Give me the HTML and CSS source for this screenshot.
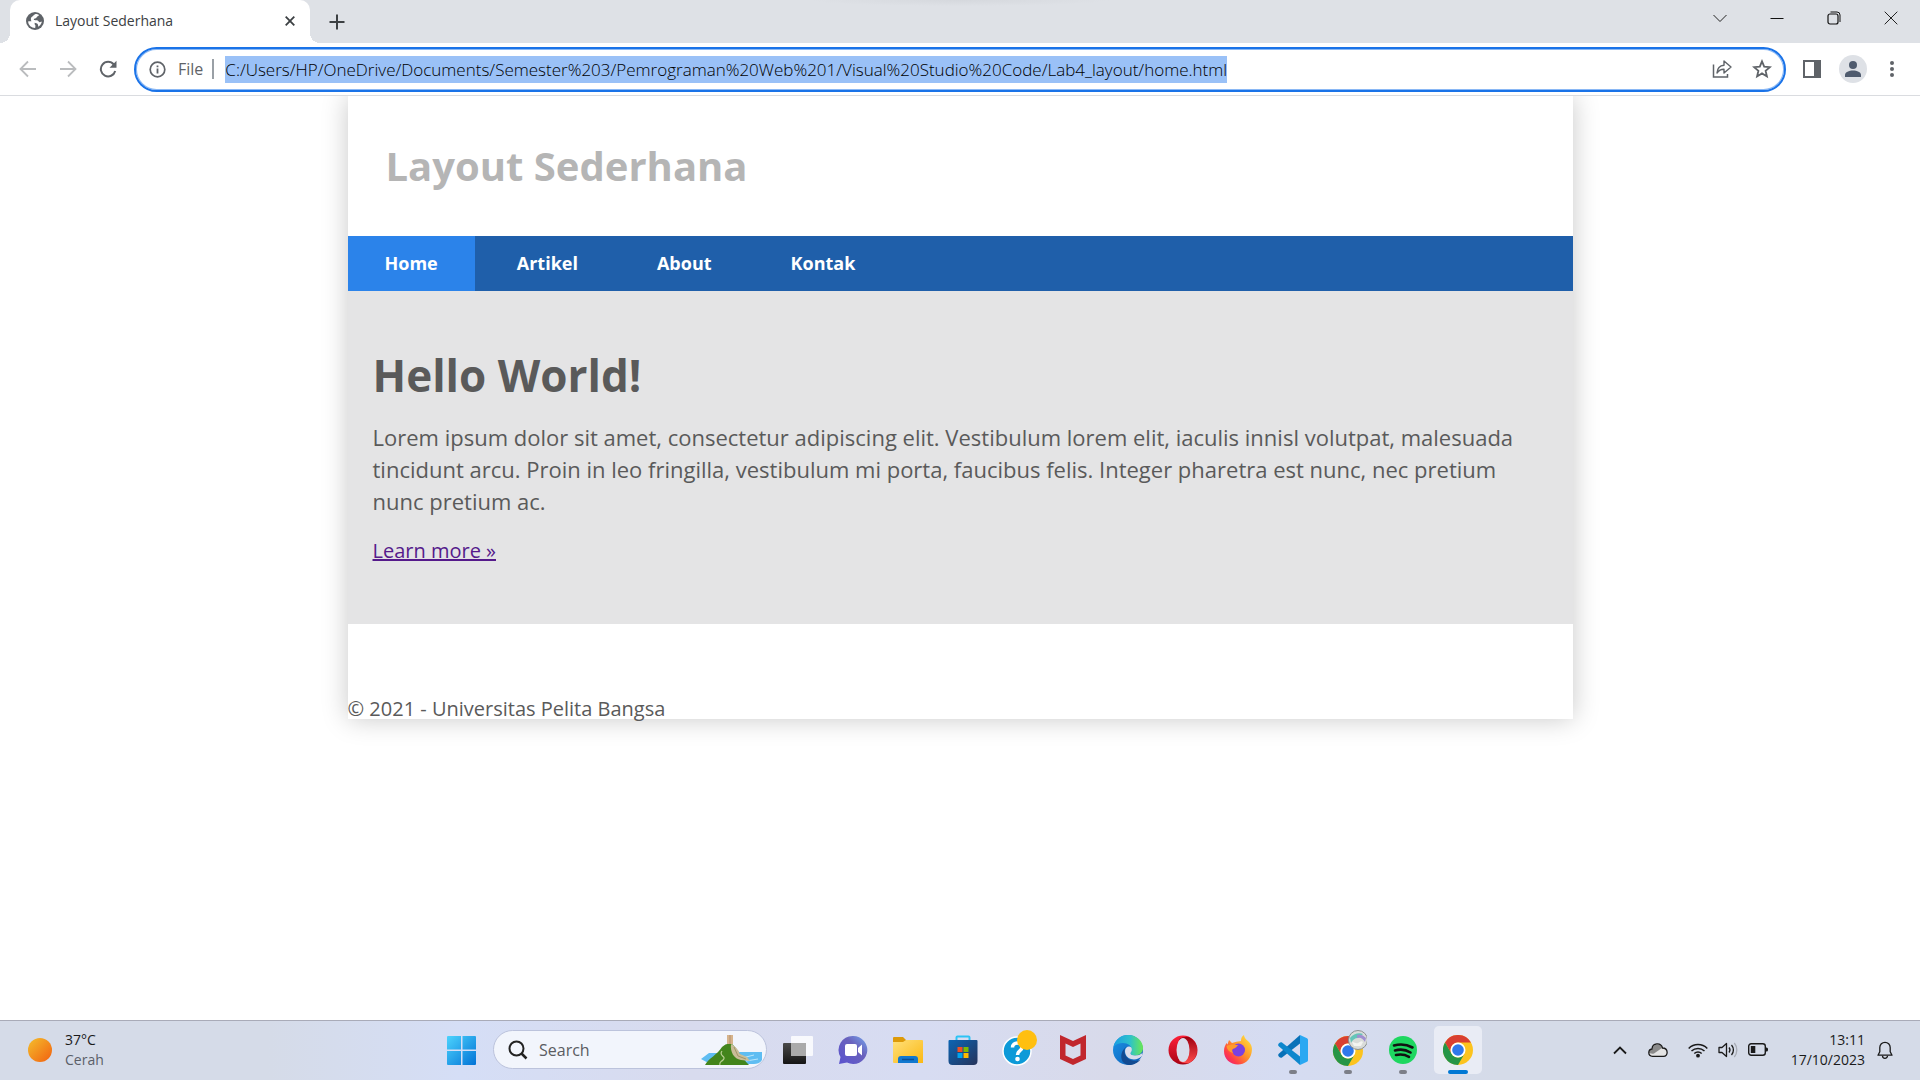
FILE: index.html
```html
<!DOCTYPE html>
<html lang="id">
<head>
<meta charset="utf-8">
<meta name="viewport" content="width=device-width, initial-scale=1">
<title>Layout Sederhana</title>
<link rel="stylesheet" href="styles.css">
</head>
<body>
<header class="browser">
  <div class="tabstrip">
    <div class="tab">
      <svg class="tab-icon" width="18" height="18" viewBox="0 0 18 18"><circle cx="9" cy="9" r="9" fill="#5f6368"/><path d="M2 9.500c2.500-.3 5.500-.3 6.500 1 .6.900-.3 1.700.5 2.300.8.500.3 2 .2 3.200A7 7 0 0 1 2 9.500zM9.500 2c1.500 0 2.500.4 3.500 1-.3 1.400-2.200 1-2.400 2.400-.2 1.200-2.800.6-2.800 1.900 0 1.300 2.500.7 3.800 1.200 1.300.4.900 1.700 2.200 1.700.9 0 1.300-.5 2.100-.6-.4 2.300-1.700 4-3.700 5.200.1-1.500-.2-2.500-1.200-3.200-1.500-1-5.200-.6-5.800-2.800C4.700 7 4.600 5.600 6 4.800 7.200 4.100 7.500 2.700 9.500 2z" fill="#fff"/></svg>
      <span class="tab-title">Layout Sederhana</span>
      <button class="icon-btn tab-close" aria-label="Close tab"><svg width="10" height="10" viewBox="0 0 10 10"><path d="M.7.7l8.600 8.600M9.300.7L.7 9.300" stroke="#3c4043" stroke-width="1.800"/></svg></button>
    </div>
    <button class="icon-btn new-tab" aria-label="New tab"><svg width="16" height="16" viewBox="0 0 16 16"><path d="M8 .5v15M.5 8h15" stroke="#3c4043" stroke-width="2"/></svg></button>
    <div class="window-controls">
      <button class="icon-btn" aria-label="Search tabs"><svg width="14" height="14" viewBox="0 0 14 14"><path d="M.5 4L7 10.500 13.500 4" fill="none" stroke="#222"/></svg></button>
      <button class="icon-btn" aria-label="Minimize"><svg width="14" height="14" viewBox="0 0 14 14"><path d="M.5 7.500h13" stroke="#111"/></svg></button>
      <button class="icon-btn" aria-label="Restore"><svg width="14" height="14" viewBox="0 0 14 14"><rect x="1" y="3" width="10" height="10" rx="2" fill="none" stroke="#111" stroke-width="1.200"/><path d="M3.500 1h6.500a3 3 0 0 1 3 3v7" fill="none" stroke="#111"/></svg></button>
      <button class="icon-btn" aria-label="Close"><svg width="14" height="14" viewBox="0 0 14 14"><path d="M.7.7l12.600 12.600M13.300.7L.7 13.300" stroke="#222"/></svg></button>
    </div>
  </div>
  <div class="toolbar">
    <button class="icon-btn tool" aria-label="Back"><svg width="18" height="18" viewBox="0 0 18 18"><path d="M17 9H2M9 1.500L1.500 9 9 16.500" fill="none" stroke="#babcbe" stroke-width="1.800"/></svg></button>
    <button class="icon-btn tool" aria-label="Forward"><svg width="18" height="18" viewBox="0 0 18 18"><path d="M1 9h15M9 1.500L16.500 9 9 16.500" fill="none" stroke="#babcbe" stroke-width="1.800"/></svg></button>
    <button class="icon-btn tool" aria-label="Reload"><svg width="18" height="18" viewBox="0 0 18 18"><path d="M14.800 4.500A7.300 7.300 0 1 0 16.200 11" fill="none" stroke="#5f6368" stroke-width="2"/><path d="M17.500.8v7h-7z" fill="#5f6368"/></svg></button>
    <div class="omnibox">
      <svg class="info" width="17" height="17" viewBox="0 0 17 17"><circle cx="8.500" cy="8.500" r="7.300" fill="none" stroke="#5f6368" stroke-width="1.700"/><path d="M8.500 7.500v5M8.500 4.400v1.800" stroke="#5f6368" stroke-width="1.800"/></svg>
      <label class="scheme" for="url">File</label>
      <input id="url" class="url" type="text" size="100" spellcheck="false" value="C:/Users/HP/OneDrive/Documents/Semester%203/Pemrograman%20Web%201/Visual%20Studio%20Code/Lab4_layout/home.html">
      <div class="omni-actions">
        <button class="icon-btn" aria-label="Share"><svg width="20" height="20" viewBox="0 0 20 20"><path d="M1.500 5.500v12.500H15.500V15" fill="none" stroke="#5f6368" stroke-width="1.500"/><path d="M5 14c.3-4.500 3-7.500 7-7.800V2l7 6-7 6V10.300C9 10.200 6.800 11.500 5 14z" fill="none" stroke="#5f6368" stroke-width="1.400" stroke-linejoin="round"/></svg></button>
        <button class="icon-btn" aria-label="Bookmark"><svg width="20" height="20" viewBox="0 0 20 20"><path d="M10 2.300l2.200 5.300 5.700.5-4.300 3.700 1.300 5.600L10 14.400l-4.900 3 1.300-5.600L2.100 8.100l5.700-.5z" fill="none" stroke="#5f6368" stroke-width="1.800"/></svg></button>
      </div>
    </div>
    <div class="tool-actions">
      <button class="icon-btn" aria-label="Side panel"><svg width="18" height="18" viewBox="0 0 18 18"><rect width="18" height="18" fill="#5f6368"/><rect x="2" y="2" width="9" height="14" fill="#fff"/></svg></button>
      <button class="icon-btn" aria-label="Profile"><svg width="28" height="28" viewBox="0 0 28 28"><circle cx="14" cy="14" r="14" fill="#dee1e6"/><circle cx="14" cy="10" r="4" fill="#4f5b6e"/><path d="M6 22v-2c0-3 4-4.500 8-4.500s8 1.500 8 4.500v2z" fill="#4f5b6e"/></svg></button>
      <button class="icon-btn" aria-label="Menu"><svg width="18" height="18" viewBox="0 0 18 18"><g fill="#5f6368"><circle cx="9" cy="3" r="2"/><circle cx="9" cy="9" r="2"/><circle cx="9" cy="15" r="2"/></g></svg></button>
    </div>
  </div>
</header>

<main class="viewport">
  <div class="container">
    <header class="site-header"><h1 class="site-title">Layout Sederhana</h1></header>
    <nav class="site-nav">
      <a class="nav-link active" href="#home">Home</a>
      <a class="nav-link" href="#artikel">Artikel</a>
      <a class="nav-link" href="#about">About</a>
      <a class="nav-link" href="#kontak">Kontak</a>
    </nav>
    <section class="hero">
      <h2 class="hero-title">Hello World!</h2>
      <p class="hero-text">Lorem ipsum dolor sit amet, consectetur adipiscing elit. Vestibulum lorem elit, iaculis innisl volutpat, malesuada tincidunt arcu. Proin in leo fringilla, vestibulum mi porta, faucibus felis. Integer pharetra est nunc, nec pretium nunc pretium ac.</p>
      <a class="hero-link" href="#more">Learn more »</a>
    </section>
    <footer class="site-footer"><p class="copyright">© 2021 - Universitas Pelita Bangsa</p></footer>
  </div>
</main>

<footer class="taskbar">
  <svg width="0" height="0" class="defs" aria-hidden="true">
    <defs>
      <linearGradient id="sun" x1="0" y1="0" x2="1" y2="1"><stop offset="0" stop-color="#f4bf2d"/><stop offset="1" stop-color="#f2600f"/></linearGradient>
      <linearGradient id="win" x1="0" y1="0" x2="1" y2="1"><stop offset="0" stop-color="#4cd3fd"/><stop offset="1" stop-color="#0273d6"/></linearGradient>
      <linearGradient id="dark" x1="0" y1="0" x2="0" y2="1"><stop offset="0" stop-color="#4a4a4a"/><stop offset="1" stop-color="#151515"/></linearGradient>
      <linearGradient id="chat" x1="1" y1="0" x2="0" y2="1"><stop offset="0" stop-color="#75a8ee"/><stop offset=".4" stop-color="#6a62bd"/><stop offset="1" stop-color="#5a52cf"/></linearGradient>
      <linearGradient id="folder" x1="0" y1="0" x2="1" y2="1"><stop offset="0" stop-color="#ffe07a"/><stop offset="1" stop-color="#fbb813"/></linearGradient>
      <linearGradient id="store" x1="0" y1="0" x2="1" y2="1"><stop offset="0" stop-color="#0b65b4"/><stop offset="1" stop-color="#26335a"/></linearGradient>
      <linearGradient id="edgeTop" x1="0" y1="0" x2="1" y2="0"><stop offset="0" stop-color="#1b9de2"/><stop offset=".55" stop-color="#2cc1cc"/><stop offset="1" stop-color="#6be852"/></linearGradient>
      <linearGradient id="edgeLow" x1="0" y1="0" x2="1" y2="1"><stop offset="0" stop-color="#1a93e6"/><stop offset="1" stop-color="#0d5bb5"/></linearGradient>
      <linearGradient id="opera" x1="0" y1="0" x2="0" y2="1"><stop offset="0" stop-color="#ff2039"/><stop offset="1" stop-color="#a70214"/></linearGradient>
      <linearGradient id="operaIn" x1="0" y1="0" x2="0" y2="1"><stop offset="0" stop-color="#9c0010"/><stop offset="1" stop-color="#ff4b4b"/></linearGradient>
      <linearGradient id="fox" x1="1" y1="0" x2="0" y2="1"><stop offset="0" stop-color="#fff044"/><stop offset=".45" stop-color="#ff9428"/><stop offset=".75" stop-color="#ff3c48"/><stop offset="1" stop-color="#e01493"/></linearGradient>
      <g id="chrome"><circle cx="15" cy="15" r="15" fill="#fcc31e"/><path d="M2 7.500A15 15 0 0 1 28 7.500H15a7.500 7.500 0 0 0-6.500 11.200z" fill="#d93f31"/><path d="M2 7.500A15 15 0 0 0 15 30l6.500-11.200a7.500 7.500 0 0 1-13 0z" fill="#259547"/><circle cx="15" cy="15" r="7.500" fill="#fff"/><circle cx="15" cy="15" r="5.800" fill="#2f78ea"/></g>
    </defs>
  </svg>
  <button class="weather">
    <svg width="24" height="24" viewBox="0 0 24 24"><circle cx="12" cy="12" r="12" fill="url(#sun)"/></svg>
    <span class="stack"><span class="line">37°C</span><span class="line muted">Cerah</span></span>
  </button>
  <div class="apps">
    <button class="app" aria-label="Start"><svg width="30" height="30" viewBox="0 0 30 30"><path d="M0 2a1 1 0 0 1 1-1h13v13.500H0zM15.500 1H28a1 1 0 0 1 1 1v12.500H15.500zM0 16h14v14H1a1 1 0 0 1-1-1zM15.500 16H29v13a1 1 0 0 1-1 1H15.500z" fill="url(#win)"/></svg></button>
    <div class="search">
      <svg width="20" height="20" viewBox="0 0 20 20"><circle cx="8.500" cy="8.500" r="7" fill="none" stroke="#222" stroke-width="2"/><path d="M13.500 13.500l5 5" stroke="#222" stroke-width="2.500"/></svg>
      <input class="search-box" type="text" placeholder="Search" aria-label="Search">
      <svg width="62" height="30" viewBox="0 0 62 30"><path d="M1 24l8-6h15v12H12zM34 17h28v8c-2 3-5 4-8 4H38z" fill="#5fbdf2"/><path d="M42 23l12-3M46 26l12-2" stroke="#b9e6fb"/><path d="M5 30c4-7 12-10 17-18 3-3 6-4 10-3 5 4 8 12 17 21z" fill="#43851c"/><path d="M31 9c4 2 7 5 9 10l7 3 3 4-9-1c-7-1-11-8-10-16z" fill="#c9bd98"/><path d="M34 12l4 9 8 3" fill="none" stroke="#a39568"/><path d="M27 0h6v9h-6z" fill="#d6b48c"/><path d="M30 0v9" stroke="#b5906c"/><path d="M22 16c-4 5 5 5 1 9-2 2-4 2-3 5" fill="none" stroke="#b9cf94" stroke-width="1.200"/></svg>
    </div>
    <button class="app" aria-label="Task view"><svg width="30" height="30" viewBox="0 0 30 30"><rect x="0" y="8" width="23" height="21" rx="1" fill="url(#dark)"/><rect x="8" y="1" width="22" height="20" rx="1" fill="#fff" fill-opacity=".82"/><rect x="8" y="8" width="15" height="13" fill="#aaa"/></svg></button>
    <button class="app" aria-label="Chat"><svg width="30" height="30" viewBox="0 0 30 30"><path d="M15 1a14 14 0 1 1-6 26.500L1 29l1.500-7A14 14 0 0 1 15 1z" fill="url(#chat)"/><rect x="7" y="9" width="12" height="12" rx="2" fill="#fff"/><path d="M20 13l4-3.500v11L20 17z" fill="#fff"/></svg></button>
    <button class="app" aria-label="File Explorer"><svg width="30" height="30" viewBox="0 0 30 30"><path d="M0 3a1 1 0 0 1 1-1h9l3 3v5H0z" fill="#dd9a09"/><path d="M0 7h10l3-2h16a1 1 0 0 1 1 1v22H1a1 1 0 0 1-1-1z" fill="url(#folder)"/><path d="M5 28v-4a3 3 0 0 1 3-3h14a3 3 0 0 1 3 3v4z" fill="#1178cf"/><path d="M9 24.500h12" stroke="#0a4e96" stroke-width="1.500"/></svg></button>
    <button class="app" aria-label="Microsoft Store"><svg width="30" height="30" viewBox="0 0 30 30"><path d="M8.500 7V2.500a1 1 0 0 1 1-1h11a1 1 0 0 1 1 1V7" fill="none" stroke="#2cc3f5" stroke-width="2"/><path d="M.5 6a1 1 0 0 1 1-1h27a1 1 0 0 1 1 1v20a4 4 0 0 1-4 4h-21a4 4 0 0 1-4-4z" fill="url(#store)"/><path d="M9.500 12h5v5h-5z" fill="#f25022"/><path d="M15.500 12h5v5h-5z" fill="#7fba00"/><path d="M9.500 18h5v5h-5z" fill="#00a4ef"/><path d="M15.500 18h5v5h-5z" fill="#ffb900"/></svg></button>
    <button class="app" aria-label="Help"><svg width="38" height="40" viewBox="0 0 38 40"><circle cx="18" cy="21" r="14" fill="#0d9ad8" stroke="#fff" stroke-width="1.500"/><path d="M13.500 17.500c0-6 9.500-6 9.500-.5 0 4-4.500 3.500-4.500 8" fill="none" stroke="#fff" stroke-width="3.500"/><circle cx="18.500" cy="29" r="2.300" fill="#fff"/><circle cx="28" cy="10" r="10" fill="#ffbf10"/></svg></button>
    <button class="app" aria-label="McAfee"><svg width="30" height="30" viewBox="0 0 30 30"><path d="M2 0l13 6L28 0v24l-13 6-13-6zM7.500 8.500v12L15 24l7.500-3.500v-12L15 12z" fill="#c1272d" fill-rule="evenodd"/></svg></button>
    <button class="app" aria-label="Edge"><svg width="30" height="30" viewBox="0 0 30 30"><circle cx="15" cy="15" r="15" fill="url(#edgeLow)"/><path d="M.5 12C2 4.500 8 0 15 0c9 0 15 6.500 15 13 0 5-4 7.500-8 7.500-3 0-4.500-1.200-4.500-2.200 0-.8 1.300-1.500 1.300-3.800C18.800 11 15 8 10 8 6 8 2.500 9.500.5 12z" fill="url(#edgeTop)"/><path d="M11.500 16c0 6 5.500 10 11 10 2.500 0 4-1 5-1.500C25 28 20.500 30 16 30 9.500 29.500 7.500 24 8.500 19c.8-3.500 3-6 5.500-7.500-1.500 1.200-2.500 2.500-2.500 4.500z" fill="#114a91"/><path d="M12 16c.2-3 2-4.500 4-4.500s3.300 1.500 2.800 4c-.4 1.800-1.300 2-1.300 3 0 1 2 2 4.500 2 3.500 0 5-.8 7.500-2.500l-.5 3c-3 3-7 4-11 3-3.500-1-6-4-6-8z" fill="#d8dceb"/></svg></button>
    <button class="app" aria-label="Opera"><svg width="30" height="30" viewBox="0 0 30 30"><circle cx="15" cy="15" r="14.500" fill="url(#opera)"/><path d="M11 4a14.300 14.300 0 0 1 10-2 14.500 14.500 0 0 1 0 26 14.300 14.300 0 0 1-10-2z" fill="url(#operaIn)"/><ellipse cx="15" cy="15" rx="6.500" ry="12" fill="#d8dceb"/></svg></button>
    <button class="app" aria-label="Firefox"><svg width="30" height="30" viewBox="0 0 30 30"><path d="M18 6c0-3 1-5 3-6 0 3 3 5 5 7 3 3 3.500 7 2.500 11-1.500 7-7 11.500-13.500 11.500C7 29.500 1 24 1 16c0-4 1.500-6 2.500-8l1 1.500L6 5l3 3c3-1 6-1.500 9-2z" fill="url(#fox)"/><circle cx="15.500" cy="15" r="6.500" fill="#7a41e0"/><path d="M3.500 11c4-2 8-2 12-.5-2 .2-2 2.500-4.500 3-2 .5-2.500 2-1 4.500-4-1-6-3.500-6.500-7z" fill="#ff9a2c"/></svg></button>
    <button class="app running" aria-label="Visual Studio Code"><svg width="30" height="30" viewBox="0 0 30 30"><path d="M22 0l7 3.200a2 2 0 0 1 1 1.800v20a2 2 0 0 1-1 1.800L22 30z" fill="#2aa8f2"/><path d="M22 0v8.500L4 22.500c-1 .6-2 .2-3-.8-1-1-1.200-2-.2-3z" fill="#0871b8"/><path d="M22 30v-8.500L4 7.500c-1-.6-2-.2-3 .8-1 1-1.200 2-.2 3z" fill="#0d87cd"/></svg></button>
    <button class="app running" aria-label="Chrome profile"><svg width="38" height="40" viewBox="0 0 38 40"><use href="#chrome" x="4" y="6"/><circle cx="29" cy="10" r="9.500" fill="#d9dcd9" stroke="#8b8f90"/><path d="M21 8c3-4 9-6 13-4l-5 4c-3 0-6 2-7 5z" fill="#65c5b8"/><path d="M28 5c4-1 6 0 9 3l-1 4c-2-3-4-5-8-4z" fill="#9f8fd0"/><path d="M23 12c3 0 4 2 6 1s3-3 5-1l-2 4h-7z" fill="#f4f4f0"/></svg></button>
    <button class="app running" aria-label="Spotify"><svg width="30" height="30" viewBox="0 0 30 30"><circle cx="15" cy="15" r="14" fill="#1ed760"/><path d="M6 10.500c6-1.700 13-1 18.500 2M7 15.500c5-1.500 11-.8 15.500 2M8 20c4.500-1 9-.5 13 1.800" fill="none" stroke="#111" stroke-width="2.600" stroke-linecap="round"/></svg></button>
    <button class="app running current" aria-label="Google Chrome"><svg width="30" height="30" viewBox="0 0 30 30"><use href="#chrome"/></svg></button>
  </div>
  <div class="tray">
    <button class="tray-btn" aria-label="Hidden icons"><svg width="14" height="14" viewBox="0 0 14 14"><path d="M1 10.500L7 4.500l6 6" fill="none" stroke="#1a1a1a" stroke-width="1.800"/></svg></button>
    <button class="tray-btn" aria-label="OneDrive"><svg width="20" height="14" viewBox="0 0 20 14"><path d="M4.500 13.300C-.5 13.300-.2 6.500 4 6 4.500-.5 13-.8 14.500 5c6 .2 6 8.300 1 8.300z" fill="#e4e4e4"/><path d="M4.500 6C5.500.5 12.500 0 14 5l-8 5.500C4 11 1 10.500 1 9.500 1 7.500 2.500 6.200 4.500 6z" fill="#8a8a8a"/><path d="M4.500 13.300C-.5 13.300-.2 6.500 4 6 4.500-.5 13-.8 14.500 5c6 .2 6 8.300 1 8.300z" fill="none" stroke="#1a1a1a" stroke-width="1.300"/></svg></button>
    <button class="tray-btn status" aria-label="Network, volume and battery">
      <svg width="20" height="16" viewBox="0 0 20 16"><g fill="none" stroke="#1a1a1a" stroke-width="1.500"><path d="M.7 6.500a13 13 0 0 1 18.600 0M3.500 9a9.500 9.500 0 0 1 13 0M6.300 11.500a5.600 5.600 0 0 1 7.400 0"/></g><circle cx="10" cy="13.700" r="1.900" fill="#1a1a1a"/></svg>
      <svg width="20" height="16" viewBox="0 0 20 16"><path d="M1 5.500h3L8.500 1.500v13L4 10.500H1z" fill="none" stroke="#1a1a1a" stroke-width="1.300" stroke-linejoin="round"/><path d="M11 5.500a4 4 0 0 1 0 5M13.500 3a7.500 7.500 0 0 1 0 10" fill="none" stroke="#1a1a1a" stroke-width="1.300"/><path d="M16.300 1a11 11 0 0 1 0 14" fill="none" stroke="#a8acb5" stroke-width="1.300"/></svg>
      <svg width="20" height="13" viewBox="0 0 20 13"><rect x=".7" y=".7" width="16.600" height="11.600" rx="2.500" fill="none" stroke="#1a1a1a" stroke-width="1.400"/><rect x="2.800" y="3" width="4.500" height="7" fill="#1a1a1a"/><path d="M17.500 4.500h1a1.500 1.500 0 0 1 1.500 1.500v1a1.500 1.500 0 0 1-1.500 1.500h-1z" fill="#1a1a1a"/></svg>
    </button>
    <button class="clock"><span class="line">13:11</span><span class="line">17/10/2023</span></button>
    <button class="tray-btn" aria-label="Notifications"><svg width="16" height="18" viewBox="0 0 16 18"><path d="M1 14.200l1.800-3.500V6.500a5.200 5.200 0 0 1 10.400 0v4.200L15 14.200z" fill="none" stroke="#1a1a1a" stroke-width="1.300" stroke-linejoin="round"/><path d="M5.500 14.800a2.500 2.500 0 0 0 5 0" fill="none" stroke="#1a1a1a" stroke-width="1.300"/></svg></button>
  </div>
</footer>
</body>
</html>
```
FILE: styles.css
```css
* { box-sizing: border-box; }

body {
  margin: 0;
  min-height: 100vh;
  display: flex;
  flex-direction: column;
  background: #fff;
  color: #5a5a5a;
  font-family: "Open Sans", "Noto Sans", sans-serif;
}

h1, h2, p { margin: 0; }

button, input {
  margin: 0;
  padding: 0;
  border: 0;
  background: none;
  color: inherit;
  font: inherit;
}

svg { display: block; flex: none; }

/* Browser chrome */
.browser { border-bottom: 1px solid #dadce0; }

.tabstrip {
  display: flex;
  align-items: center;
  height: 43px;
  padding: 0 1px 0 10px;
  background: radial-gradient(150px 6px at 50% 0, #d5d8dd, #dee1e6);
}

.tab {
  position: relative;
  display: flex;
  align-items: center;
  width: 300px;
  height: 43px;
  padding: 0 15px 2px 16px;
  border-radius: 10px 10px 0 0;
  background: #fff;
}

.tab::before,
.tab::after {
  content: "";
  position: absolute;
  bottom: 0;
  width: 10px;
  height: 10px;
}

.tab::before { left: -10px; background: radial-gradient(circle at 0 0, transparent 10px, #fff 10px); }
.tab::after { right: -10px; background: radial-gradient(circle at 100% 0, transparent 10px, #fff 10px); }

.tab-title {
  flex: 1;
  margin-left: 11px;
  color: #3c4043;
  font-size: 14px;
}

.icon-btn {
  display: flex;
  align-items: center;
  justify-content: center;
}

.new-tab { margin-left: 19px; }

.window-controls {
  display: flex;
  align-self: flex-start;
  margin-left: auto;
}

.window-controls .icon-btn { width: 57px; height: 36px; }

.toolbar {
  display: flex;
  align-items: center;
  height: 52px;
  padding: 0 7px 0 8px;
}

.tool { width: 40px; height: 40px; }

.omnibox {
  flex: 1;
  display: flex;
  align-items: center;
  height: 45px;
  margin-left: 6px;
  padding: 0 12px 0 13px;
  border: 2px solid #1a73e8;
  border-radius: 23px;
  box-shadow: inset 0 0 0 1px #8ab8f5;
}

.scheme {
  margin-left: 12px;
  padding-right: 9px;
  border-right: 2px solid #9aa0a6;
  color: #5f6368;
  font-size: 16px;
  line-height: 20px;
}

.url {
  field-sizing: content;
  height: 27px;
  margin-left: 11px;
  background: #9ac1f7;
  color: #000;
  font-size: 17px;
  font-weight: 300;
}

.omni-actions {
  display: flex;
  gap: 20px;
  margin-left: auto;
}

.tool-actions {
  display: flex;
  align-items: center;
  gap: 18px;
  margin-left: 17px;
}

.tool-actions .icon-btn:last-child { width: 42px; margin-left: -14px; }

/* Web page */
.viewport {
  flex: 1;
  overflow: hidden;
}

.container {
  max-width: 1225px;
  margin: 0 auto;
  box-shadow: 0 0 25px 0 #c8c8c8;
}

.site-header { padding: 43px 38px; }

.site-title {
  color: #b5b5b5;
  font-size: 40px;
  line-height: 54px;
}

.site-nav {
  display: flex;
  gap: 5px;
  background: #1f5faa;
}

.nav-link {
  padding: 0 37px;
  color: #fff;
  font-size: 18px;
  font-weight: 700;
  line-height: 55px;
  text-decoration: none;
}

.nav-link.active { background: #2b83ea; }

.hero {
  padding: 54px 25px 59px;
  background: #e4e4e5;
}

.hero-title {
  margin-bottom: 16px;
  font-size: 44px;
  line-height: 60px;
}

.hero-text {
  margin-bottom: 20px;
  font-size: 22px;
  line-height: 32px;
}

.hero-link {
  display: block;
  width: fit-content;
  color: #551a8b;
  font-size: 20px;
  line-height: 28px;
}

.site-footer { padding-top: 75px; }

.copyright {
  font-size: 20px;
  line-height: 20px;
}

/* Taskbar */
.taskbar {
  display: grid;
  grid-template-columns: 1fr auto 1fr;
  align-items: center;
  height: 60px;
  padding-bottom: 2px;
  border-top: 1px solid #a9abb8;
  background: linear-gradient(90deg, #d5dbe8 0%, #d5dbe8 14%, #d5def6 24%, #d8dbee 36%, #d7dcf2 48%, #d8daea 58%, #d5dcf2 67%, #d5dbe8 78%, #d5dbe8 100%);
}

.defs { position: absolute; }

.weather {
  display: flex;
  align-items: center;
  gap: 13px;
  padding-left: 28px;
  text-align: left;
}

.line {
  display: block;
  color: #1a1a1a;
  font-size: 14px;
  line-height: 20px;
}

.muted { color: #5b5f68; }

.apps {
  display: flex;
  align-items: center;
  gap: 7px;
}

.app {
  position: relative;
  display: flex;
  align-items: center;
  justify-content: center;
  width: 48px;
  height: 48px;
  border-radius: 5px;
}

.running::after {
  content: "";
  position: absolute;
  bottom: 0;
  left: 20px;
  width: 8px;
  height: 4px;
  border-radius: 2px;
  background: #7c7f88;
}

.current { background: #e9ecf5; }

.current::after {
  left: 14px;
  width: 20px;
  background: #0078d4;
}

.search {
  display: flex;
  align-items: center;
  width: 274px;
  height: 39px;
  padding: 0 4px 0 14px;
  border: 1px solid #bcc3dc;
  border-radius: 20px;
  background: #f2f5fc;
}

.search-box {
  flex: 1;
  min-width: 0;
  margin-left: 11px;
  font-size: 16px;
}

.search-box::placeholder { color: #5a5c62; opacity: 1; }

.tray {
  display: flex;
  align-items: center;
  justify-content: flex-end;
  padding-right: 27px;
}

.tray-btn {
  display: flex;
  align-items: center;
  justify-content: center;
  min-width: 17px;
}

.tray-btn + .tray-btn { margin-left: 20px; }

.status { gap: 10px; }

.clock {
  width: 97px;
  margin-right: 11px;
  text-align: right;
}
```
